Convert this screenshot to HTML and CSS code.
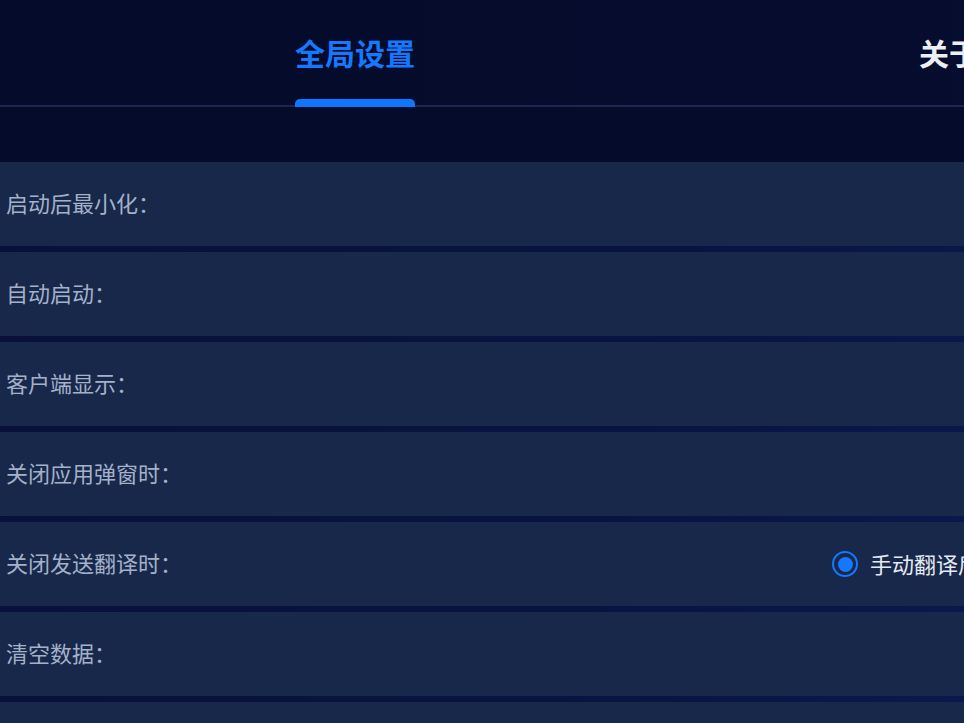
FILE: index.html
```html
<!DOCTYPE html>
<html lang="zh-CN">
<head>
<meta charset="utf-8">
<title>设置</title>
<link rel="stylesheet" href="styles.css">
</head>
<body>
<div class="page">
  <nav class="tabs">
    <div class="tab active">全局设置</div>
    <div class="tab">关于我们</div>
  </nav>
  <main class="settings">
    <div class="row"><span class="label">启动后最小化：</span></div>
    <div class="row"><span class="label">自动启动：</span></div>
    <div class="row"><span class="label">客户端显示：</span></div>
    <div class="row"><span class="label">关闭应用弹窗时：</span></div>
    <div class="row">
      <span class="label">关闭发送翻译时：</span>
      <div class="options">
        <label class="radio checked"><span class="dot"></span><span class="opt-text">手动翻译后发送</span></label>
      </div>
    </div>
    <div class="row"><span class="label">清空数据：</span></div>
    <div class="row"><span class="label">&nbsp;</span></div>
  </main>
</div>
</body>
</html>
```

FILE: styles.css
```css
html, body {
  margin: 0;
  padding: 0;
  width: 964px;
  height: 723px;
  overflow: hidden;
}
body {
  background: #050c2b;
  font-family: "Noto Sans CJK SC", "Noto Sans", sans-serif;
}
.page {
  width: 1400px;
}
.tabs {
  display: flex;
  gap: 504px;
  height: 105px;
  padding-left: 295px;
  border-bottom: 2px solid #1b2752;
  background: linear-gradient(90deg, #050b2a 0%, #060e30 100%);
  align-items: center;
}
.tab {
  position: relative;
  height: 105px;
  box-sizing: border-box;
  padding-bottom: 2px;
  display: flex;
  align-items: center;
  font-size: 30px;
  font-weight: 700;
  color: #eceef4;
  line-height: 30px;
  white-space: nowrap;
}
.tab.active {
  color: #1479ff;
}
.tab.active::after {
  content: "";
  position: absolute;
  left: 0;
  right: 0;
  bottom: -2px;
  height: 8px;
  background: #0d77ff;
  border-radius: 5px 5px 0 0;
}
.settings {
  display: flex;
  flex-direction: column;
  gap: 6px;
  margin-top: 55px;
  background: linear-gradient(105deg, #08103a 0%, #081440 45%, #0b1f5c 100%);
}
.row {
  height: 84px;
  background: #17284a;
  display: grid;
  grid-template-columns: 832px auto;
  align-items: center;
}
.label {
  padding-left: 6px;
  padding-bottom: 4px;
  font-size: 22px;
  color: #a4b1c9;
  white-space: nowrap;
}
.options {
  display: flex;
  align-items: center;
}
.radio {
  display: flex;
  align-items: center;
  gap: 12px;
  white-space: nowrap;
}
.dot {
  width: 26px;
  height: 26px;
  box-sizing: border-box;
  border: 2px solid #1677ff;
  border-radius: 50%;
  display: flex;
  align-items: center;
  justify-content: center;
}
.radio.checked .dot::after {
  content: "";
  width: 15px;
  height: 15px;
  border-radius: 50%;
  background: #1677ff;
}
.opt-text {
  font-size: 22px;
  padding-bottom: 3px;
  color: #e6eaf2;
}
```
